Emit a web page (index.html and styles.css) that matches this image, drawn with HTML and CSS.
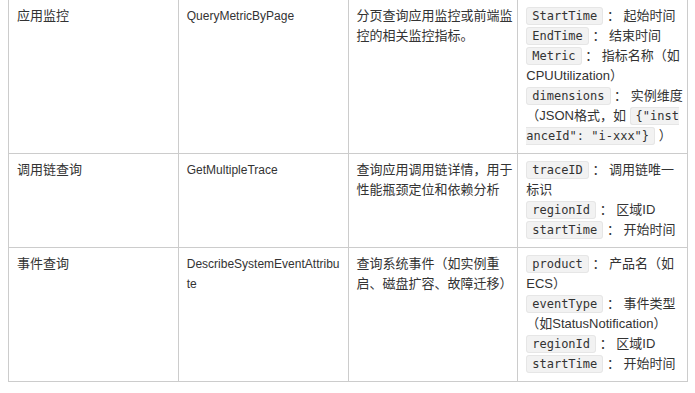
FILE: index.html
```html
<!DOCTYPE html>
<html lang="zh-CN">
<head>
<meta charset="utf-8">
<title>API 列表</title>
<link rel="stylesheet" href="styles.css">
</head>
<body>
<table class="api-table">
  <colgroup><col class="c"><col class="c"><col class="c"><col class="c"></colgroup>
  <tbody>
    <tr>
      <td>应用监控</td>
      <td class="api">QueryMetricByPage</td>
      <td>分页查询应用监控或前端监控的相关监控指标。</td>
      <td><code>StartTime</code> ： 起始时间<br><code>EndTime</code> ： 结束时间<br><code>Metric</code> ： 指标名称（如CPUUtilization）<br><code>dimensions</code> ： 实例维度（JSON格式，如 <code>{"instanceId": "i-xxx"}</code> ）</td>
    </tr>
    <tr>
      <td>调用链查询</td>
      <td class="api">GetMultipleTrace</td>
      <td>查询应用调用链详情，用于性能瓶颈定位和依赖分析</td>
      <td><code>traceID</code> ： 调用链唯一标识<br><code>regionId</code> ： 区域ID<br><code>startTime</code> ： 开始时间</td>
    </tr>
    <tr>
      <td>事件查询</td>
      <td class="api">DescribeSystemEventAttribute</td>
      <td>查询系统事件（如实例重启、磁盘扩容、故障迁移）</td>
      <td><code>product</code> ： 产品名（如ECS）<br><code>eventType</code> ： 事件类型（如StatusNotification）<br><code>regionId</code> ： 区域ID<br><code>startTime</code> ： 开始时间</td>
    </tr>
  </tbody>
</table>
</body>
</html>
```
FILE: styles.css
```css
html, body {
  background: #ffffff;
}
body {
  margin: 0 7px 0 8px;
  font-family: "Liberation Sans", "Noto Sans CJK SC", sans-serif;
  font-size: 13px;
  line-height: 20px;
  color: #333333;
}
.api-table {
  margin-top: -1px;
  width: 680px;
  table-layout: fixed;
  border-collapse: collapse;
}
.api-table .c {
  width: 25%;
}
.api-table td {
  vertical-align: top;
  border: 1px solid #cccccc;
  padding: 6px 4px 7px 8px;
  overflow-wrap: anywhere;
}
.api-table td.api {
  font-size: 12px;
  padding-right: 7px;
}
.api-table code {
  font-family: "DejaVu Sans Mono", "Liberation Mono", monospace;
  font-size: 12px;
  line-height: 1;
  background: #f2f2f2;
  border: 1px solid #e6e6e6;
  border-radius: 3px;
  padding: 1px 5px;
  word-break: break-all;
}
```
